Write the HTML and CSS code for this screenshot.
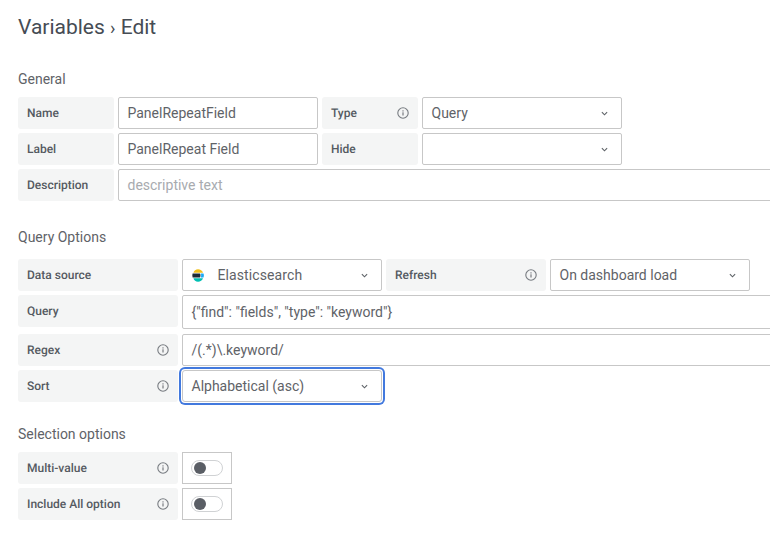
FILE: index.html
```html
<!DOCTYPE html>
<html lang="en">
<head>
  <meta charset="UTF-8">
  <meta name="viewport" content="width=device-width, initial-scale=1.0">
  <title>Variables - Edit</title>
  <link rel="stylesheet" href="styles.css">
</head>
<body>
  <svg class="defs" width="0" height="0">
    <symbol id="info" viewBox="0 0 12 12">
      <circle cx="6" cy="6" r="5.2" fill="none" stroke="currentColor" stroke-width="1.1"/>
      <rect x="5.4" y="5.3" width="1.2" height="3.2" fill="currentColor"/>
      <rect x="5.4" y="3.3" width="1.2" height="1.2" fill="currentColor"/>
    </symbol>
    <symbol id="chevron" viewBox="0 0 8 5">
      <path d="M1 1l3 3 3-3" fill="none" stroke="currentColor" stroke-width="1.3"/>
    </symbol>
  </svg>

  <h1 class="page-title">Variables <span class="sep">›</span> Edit</h1>

  <section class="group group-general">
    <h2>General</h2>
    <div class="row">
      <div class="label">Name</div>
      <div class="field w200">PanelRepeatField</div>
      <div class="label">Type <svg class="info"><use href="#info"/></svg></div>
      <div class="field w200 select">Query <svg class="chevron"><use href="#chevron"/></svg></div>
    </div>
    <div class="row">
      <div class="label">Label</div>
      <div class="field w200">PanelRepeat Field</div>
      <div class="label">Hide</div>
      <div class="field w200 select"><svg class="chevron"><use href="#chevron"/></svg></div>
    </div>
    <div class="row">
      <div class="label">Description</div>
      <div class="field wide placeholder">descriptive text</div>
    </div>
  </section>

  <section class="group group-query">
    <h2>Query Options</h2>
    <div class="row">
      <div class="label w160">Data source</div>
      <div class="field w200 select">
        <span class="ds">
          <svg class="es-logo" viewBox="0 0 12 13">
            <path d="M1.4 3.8C2 1.6 3.8.2 6 .2c2.3 0 4.3 1.4 5 3.6z" fill="#f0bf1a"/>
            <path d="M.6 4.6h7.2c.9 0 .9 3.8 0 3.8H.6C.2 7.2.2 5.8.6 4.6z" fill="#1d2a36"/>
            <path d="M8.8 4.6h2.7c.5 1.2.5 2.6 0 3.8H8.8c.5-1.2.5-2.6 0-3.8z" fill="#1ba9f5"/>
            <path d="M1.4 9.2h9.6c-.7 2.2-2.7 3.6-5 3.6-2.2 0-4-1.4-4.6-3.6z" fill="#00bfb3"/>
          </svg>
          Elasticsearch
        </span>
        <svg class="chevron"><use href="#chevron"/></svg>
      </div>
      <div class="label w160">Refresh <svg class="info"><use href="#info"/></svg></div>
      <div class="field w200 select">On dashboard load <svg class="chevron"><use href="#chevron"/></svg></div>
    </div>
    <div class="row row-query">
      <div class="label w160">Query</div>
      <div class="field wide tall">{"find": "fields", "type": "keyword"}</div>
    </div>
    <div class="row row-regex">
      <div class="label w160">Regex <svg class="info"><use href="#info"/></svg></div>
      <div class="field wide">/(.*)\.keyword/</div>
    </div>
    <div class="row">
      <div class="label w160">Sort <svg class="info"><use href="#info"/></svg></div>
      <div class="field w200 select focused">Alphabetical (asc) <svg class="chevron"><use href="#chevron"/></svg></div>
    </div>
  </section>

  <section class="group group-selection">
    <h2>Selection options</h2>
    <div class="row">
      <div class="label w160">Multi-value <svg class="info"><use href="#info"/></svg></div>
      <div class="toggle-box"><span class="toggle"></span></div>
    </div>
    <div class="row">
      <div class="label w160">Include All option <svg class="info"><use href="#info"/></svg></div>
      <div class="toggle-box"><span class="toggle"></span></div>
    </div>
  </section>
</body>
</html>
```

FILE: styles.css
```css
html, body {
  height: 100%;
}
html {
  overflow: hidden;
}
body {
  margin: 0;
  padding: 0 0 0 18px;
  overflow: hidden;
  background-color: #fff;
  color: #464c54;
  font-family: Roboto, "Liberation Sans", sans-serif;
}
.defs {
  position: absolute;
}
.page-title {
  margin: 0;
  padding-top: 14px;
  font-size: 21px;
  line-height: 26px;
  font-weight: 400;
  color: #464c54;
}
.sep {
  font-size: 18px;
}
.group h2 {
  margin: 0 0 10px;
  font-size: 14px;
  line-height: 16px;
  font-weight: 400;
  color: #5f6368;
}
.group-general {
  margin-top: 30px;
}
.group-query {
  margin-top: 28px;
}
.group-selection {
  margin-top: 24px;
}
.group-query h2 {
  margin-bottom: 14px;
}
.row {
  display: flex;
  gap: 4px;
  margin-bottom: 4px;
  width: 900px;
}
.row-query {
  margin-bottom: 5px;
}
.label {
  display: flex;
  align-items: center;
  justify-content: space-between;
  box-sizing: border-box;
  width: 96px;
  height: 32px;
  padding: 0 9px;
  flex-shrink: 0;
  background-color: #f4f5f5;
  border-radius: 3px;
  font-size: 12px;
  font-weight: 500;
  color: #555a61;
  text-rendering: geometricPrecision;
}
.w160 {
  width: 160px;
}
.field {
  display: flex;
  align-items: center;
  box-sizing: border-box;
  height: 32px;
  padding: 0 9px 0 8.5px;
  flex-shrink: 0;
  background-color: #fff;
  border: 1px solid #c7c7c7;
  border-radius: 2px;
  font-size: 14px;
  color: #5f6368;
}
.w200 {
  width: 200px;
}
.wide {
  width: 700px;
}
.tall {
  height: 34px;
}
.placeholder {
  color: #a8abaf;
}
.select {
  justify-content: space-between;
}
.chevron {
  width: 7px;
  height: 5px;
  margin: 1px 4px 0 auto;
  color: #5f6368;
}
.info {
  width: 12px;
  height: 12px;
  color: #777b80;
}
.ds {
  display: flex;
  align-items: center;
  gap: 14px;
  letter-spacing: 0.1px;
}
.es-logo {
  width: 12px;
  height: 13px;
}
.focused {
  box-shadow: 0 0 0 1px #fff, 0 0 0 3px #4279de;
  border-radius: 3px;
}
.toggle-box {
  display: flex;
  align-items: center;
  box-sizing: border-box;
  width: 50px;
  height: 32px;
  padding-left: 8px;
  border: 1px solid #c7c7c7;
}
.toggle {
  position: relative;
  box-sizing: border-box;
  width: 32px;
  height: 16px;
  border: 1px solid #d0d2d4;
  border-radius: 8px;
  background-color: #fff;
}
.toggle::after {
  content: "";
  position: absolute;
  left: 2px;
  top: 1px;
  width: 12px;
  height: 12px;
  border-radius: 50%;
  background-color: #5a5e65;
}
```
